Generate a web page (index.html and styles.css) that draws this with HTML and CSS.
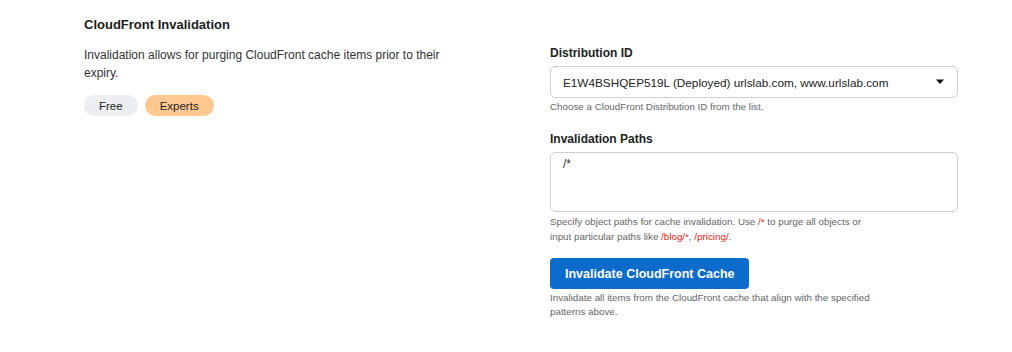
FILE: index.html
```html
<!DOCTYPE html>
<html lang="en">
<head>
<meta charset="utf-8">
<title>CloudFront Invalidation</title>
<link rel="stylesheet" href="styles.css">
</head>
<body>
<section class="module">
  <h2 class="module-title">CloudFront Invalidation</h2>
  <div class="module-body">
    <div class="module-info">
      <p class="module-desc">Invalidation allows for purging CloudFront cache items prior to their expiry.</p>
      <div class="tags">
        <span class="tag tag-free">Free</span>
        <span class="tag tag-experts">Experts</span>
      </div>
    </div>
    <div class="module-form">
      <div class="field">
        <label class="field-label">Distribution ID</label>
        <div class="select">
          <span class="select-value">E1W4BSHQEP519L (Deployed) urlslab.com, www.urlslab.com</span>
          <svg class="select-arrow" width="10" height="6" viewBox="0 0 10 6"><path d="M1 0.5h8L5 5z" fill="#111"/></svg>
        </div>
        <p class="hint">Choose a CloudFront Distribution ID from the list.</p>
      </div>
      <div class="field field-paths">
        <label class="field-label">Invalidation Paths</label>
        <div class="textarea">/*</div>
        <p class="hint hint-wide">Specify object paths for cache invalidation. Use <span class="code">/*</span> to purge all objects or input particular paths like <span class="code">/blog/*</span>, <span class="code">/pricing/</span>.</p>
      </div>
      <div class="field field-action">
        <button class="btn-primary" type="button">Invalidate CloudFront Cache</button>
        <p class="hint hint-wide">Invalidate all items from the CloudFront cache that align with the specified patterns above.</p>
      </div>
    </div>
  </div>
</section>
</body>
</html>
```
FILE: styles.css
```css
* { box-sizing: border-box; }
html, body { margin: 0; padding: 0; background: #fff; }
body {
  font-family: "Liberation Sans", Arial, sans-serif;
  color: #333;
  width: 1012px;
  height: 352px;
  overflow: hidden;
}
.module {
  padding: 16px 54px 0 84px;
}
.module-title {
  margin: 0;
  font-size: 13px;
  line-height: 18px;
  font-weight: 700;
  color: #1c1c1c;
}
.module-body {
  display: grid;
  grid-template-columns: 466px 408px;
  margin-top: 12px;
}
.module-desc {
  margin: 0;
  max-width: 370px;
  font-size: 12px;
  line-height: 18px;
  color: #333;
}
.tags {
  display: flex;
  gap: 7px;
  margin-top: 13px;
}
.tag {
  display: inline-flex;
  align-items: center;
  height: 21px;
  padding: 0 15px;
  border-radius: 11px;
  font-size: 11.5px;
  color: #222;
}
.tag-free { background: #eceef2; }
.tag-experts { background: #fec890; }
.module-form {
  display: flex;
  flex-direction: column;
}
.field-label {
  display: block;
  font-size: 12px;
  line-height: 14px;
  font-weight: 700;
  color: #222;
  margin-bottom: 6px;
}
.select {
  display: flex;
  align-items: center;
  justify-content: space-between;
  height: 32px;
  padding: 0 12px 0 12px;
  border: 1px solid #cfcfcf;
  border-radius: 5px;
  font-size: 11.75px;
  color: #222;
}
.select-arrow { display: block; }
.hint {
  margin: 2px 0 0;
  font-size: 9.8px;
  line-height: 14px;
  color: #666;
}
.hint-wide { max-width: 330px; line-height: 15px; }
.field-paths { margin-top: 18px; }
.textarea {
  height: 60px;
  padding: 4px 12px;
  border: 1px solid #cfcfcf;
  border-radius: 5px;
  font-size: 12px;
  line-height: 14px;
  color: #333;
}
.code { color: #e0190f; }
.field-action { margin-top: 14px; }
.btn-primary {
  display: block;
  height: 31px;
  padding: 0 15px;
  border: 0;
  border-radius: 4px;
  background: #0c6bcb;
  color: #fff;
  font-family: "Liberation Sans", Arial, sans-serif;
  font-size: 12.5px;
  font-weight: 700;
}
.field-action .hint { margin-top: 2px; line-height: 14px; }
```
